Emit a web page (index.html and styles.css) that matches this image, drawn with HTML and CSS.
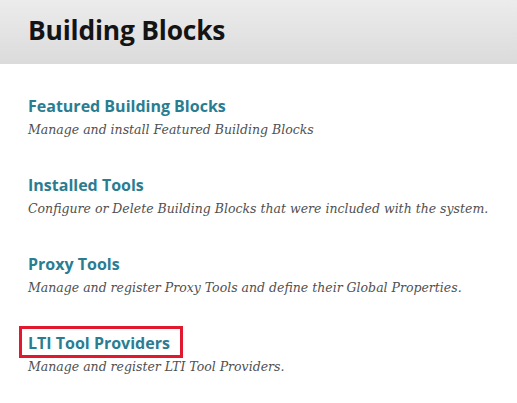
FILE: index.html
```html
<!DOCTYPE html>
<html>
<head>
<meta charset="utf-8">
<link rel="stylesheet" href="styles.css">
</head>
<body>
<header class="page-header">
  <h1 class="page-title">Building Blocks</h1>
</header>
<ul class="tool-list">
  <li class="tool">
    <a class="tool-link" href="#">Featured Building Blocks</a>
    <p class="tool-desc">Manage and install Featured Building Blocks</p>
  </li>
  <li class="tool">
    <a class="tool-link" href="#">Installed Tools</a>
    <p class="tool-desc">Configure or Delete Building Blocks that were included with the system.</p>
  </li>
  <li class="tool">
    <a class="tool-link" href="#">Proxy Tools</a>
    <p class="tool-desc">Manage and register Proxy Tools and define their Global Properties.</p>
  </li>
  <li class="tool">
    <a class="tool-link highlighted" href="#">LTI Tool Providers</a>
    <p class="tool-desc">Manage and register LTI Tool Providers.</p>
  </li>
</ul>
</body>
</html>
```
FILE: styles.css
```css
html, body {
  margin: 0;
  padding: 0;
  background: #fff;
}
body {
  width: 517px;
  height: 403px;
  overflow: hidden;
}
.page-header {
  height: 64px;
  box-sizing: border-box;
  padding: 12px 0 0 28px;
  background: linear-gradient(#ececec, #dbdbdb);
}
.page-title {
  margin: 0;
  font-family: "Open Sans", sans-serif;
  font-weight: 700;
  font-size: 26.4px;
  line-height: 36px;
  color: #141414;
  letter-spacing: -0.2px;
}
.tool-list {
  list-style: none;
  margin: 0;
  padding: 31px 0 0 28px;
  display: flex;
  flex-direction: column;
  gap: 34px;
}
.tool {
  display: flex;
  flex-direction: column;
  align-items: flex-start;
}
.tool-link {
  font-family: "Open Sans", sans-serif;
  font-weight: 700;
  font-size: 16px;
  line-height: 22px;
  color: #2a7d91;
  text-decoration: none;
}
.tool-link.highlighted {
  border: 3px solid #e2192e;
  padding: 3px 10px 1px 6px;
  margin: -6px 0 -4px -9px;
}
.tool-desc {
  margin: 3px 0 0;
  font-family: "DejaVu Serif", serif;
  font-style: italic;
  font-size: 12.5px;
  line-height: 20px;
  color: #505050;
}
```
